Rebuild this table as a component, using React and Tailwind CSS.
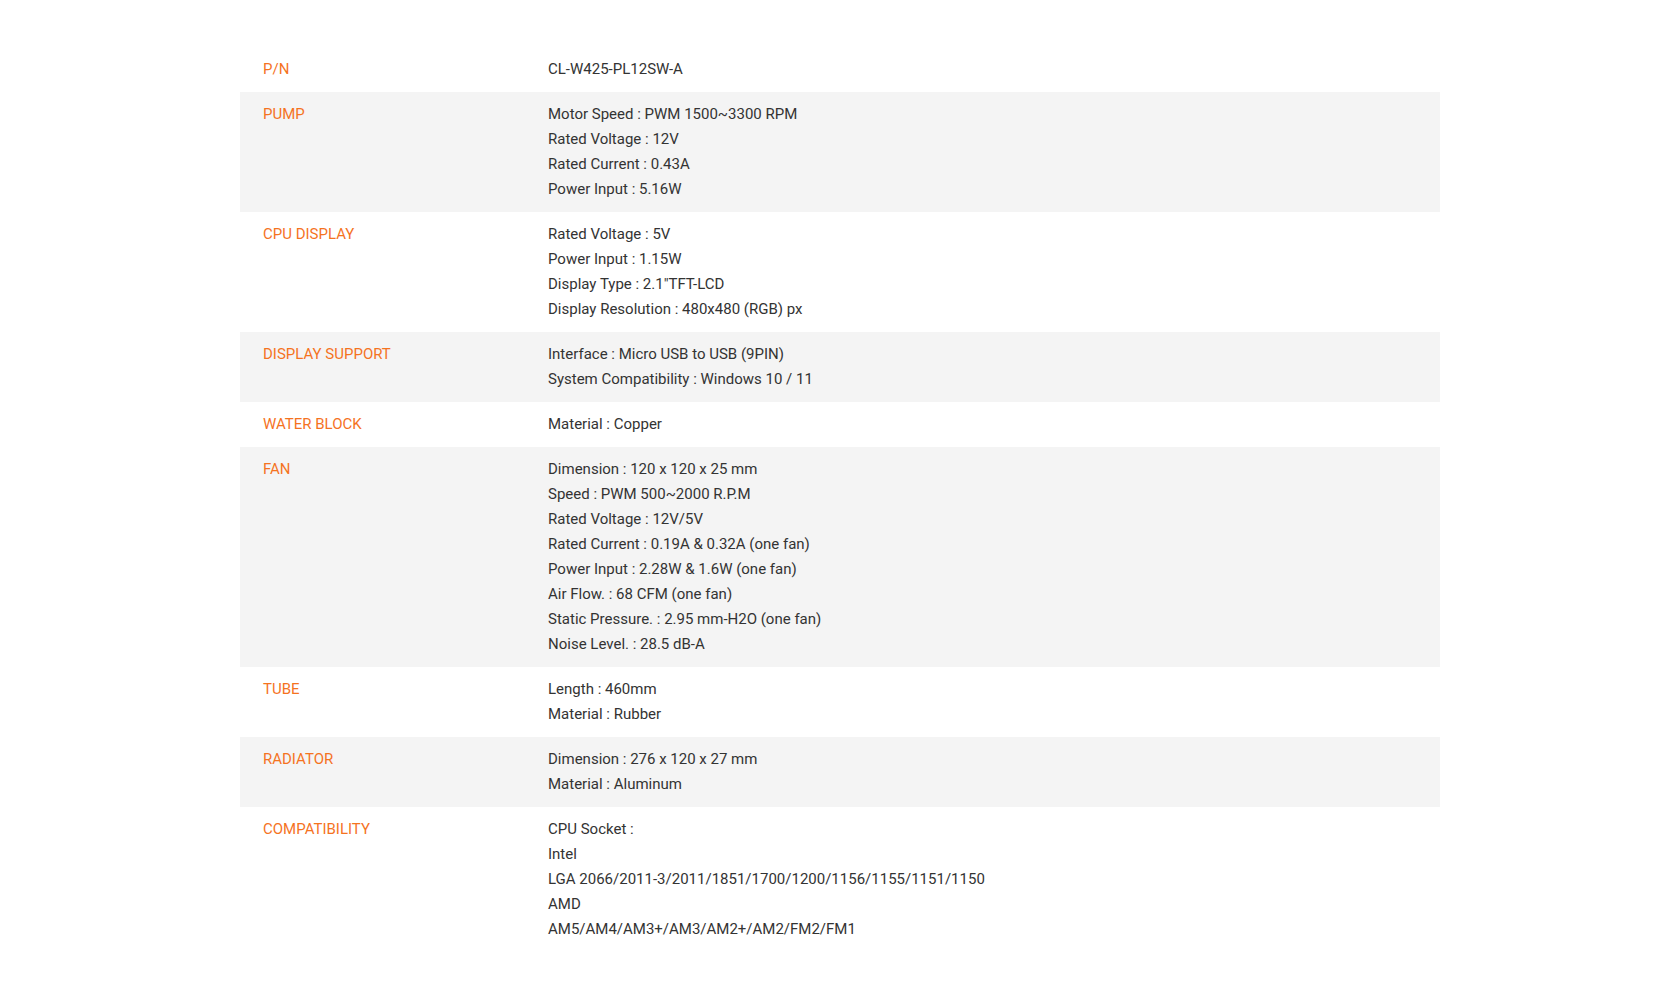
import React from "react";

const rows = [
  ["P/N", ["CL-W425-PL12SW-A"]],
  ["PUMP", ["Motor Speed : PWM 1500~3300 RPM", "Rated Voltage : 12V", "Rated Current : 0.43A", "Power Input : 5.16W"]],
  ["CPU DISPLAY", ["Rated Voltage : 5V", "Power Input : 1.15W", "Display Type : 2.1\"TFT-LCD", "Display Resolution : 480x480 (RGB) px"]],
  ["DISPLAY SUPPORT", ["Interface : Micro USB to USB (9PIN)", "System Compatibility : Windows 10 / 11"]],
  ["WATER BLOCK", ["Material : Copper"]],
  ["FAN", ["Dimension : 120 x 120 x 25 mm", "Speed : PWM 500~2000 R.P.M", "Rated Voltage : 12V/5V", "Rated Current : 0.19A & 0.32A (one fan)", "Power Input : 2.28W & 1.6W (one fan)", "Air Flow. : 68 CFM (one fan)", "Static Pressure. : 2.95 mm-H2O (one fan)", "Noise Level. : 28.5 dB-A"]],
  ["TUBE", ["Length : 460mm", "Material : Rubber"]],
  ["RADIATOR", ["Dimension : 276 x 120 x 27 mm", "Material : Aluminum"]],
  ["COMPATIBILITY", ["CPU Socket :", "Intel", "LGA 2066/2011-3/2011/1851/1700/1200/1156/1155/1151/1150", "AMD", "AM5/AM4/AM3+/AM3/AM2+/AM2/FM2/FM1"]],
];

export default function App() {
  return (
    <div className="min-h-[997px] bg-white pt-[47px] font-['Roboto',sans-serif] text-[15px] leading-[25px]">
      <div className="mx-auto w-[1200px]">
        {rows.map(([label, vals], i) => (
          <div key={label} className={`flex py-[10px] ${i % 2 === 1 ? "bg-[#f4f4f4]" : "bg-white"}`}>
            <div className="w-[308px] shrink-0 pl-[23px] text-[#f5731f]">{label}</div>
            <div className="flex flex-col text-[#333333]">
              {vals.map((v) => (
                <div key={v}>{v}</div>
              ))}
            </div>
          </div>
        ))}
      </div>
    </div>
  );
}
